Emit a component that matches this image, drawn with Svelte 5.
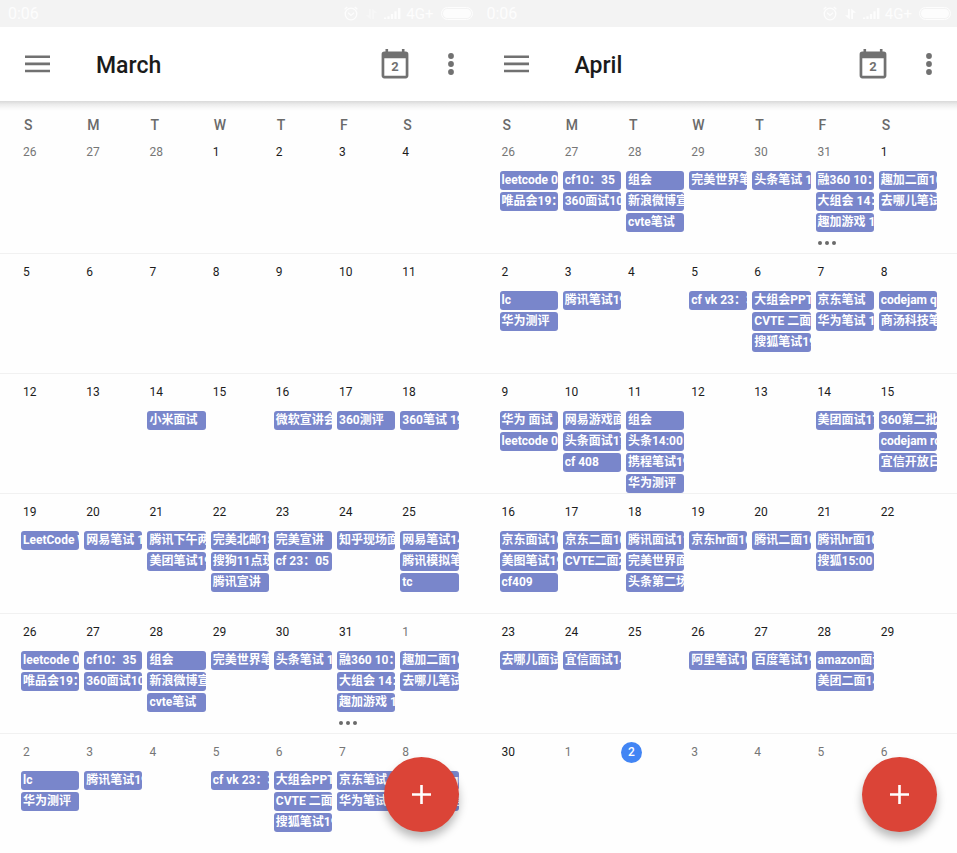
<script>
  const weekdays = [
    ['S', 'Sunday'], ['M', 'Monday'], ['T', 'Tuesday'], ['W', 'Wednesday'],
    ['T', 'Thursday'], ['F', 'Friday'], ['S', 'Saturday'],
  ];

  // The week that both months share.
  const turnOfMonth = [
    ['leetcode 09', '唯品会19：00'],
    ['cf10：35', '360面试10'],
    ['组会', '新浪微博宣讲', 'cvte笔试'],
    ['完美世界笔试'],
    ['头条笔试 19'],
    ['融360 10：00', '大组会 14：00', '趣加游戏 19'],
    ['趣加二面10', '去哪儿笔试'],
  ];
  const firstOfApril = [
    ['lc', '华为测评'],
    ['腾讯笔试19'],
    [],
    ['cf vk 23：35'],
    ['大组会PPT', 'CVTE 二面', '搜狐笔试19'],
    ['京东笔试', '华为笔试 19'],
    ['codejam qual', '商汤科技笔试'],
  ];

  // Builds one week; `outside` tells which days belong to another month.
  function week(dates, events = [], outside = () => false, more = -1, today = -1) {
    return dates.map((date, i) => ({
      date,
      events: events[i] ?? [],
      outside: outside(i),
      more: i === more,
      today: i === today,
    }));
  }

  const months = [
    {
      name: 'March',
      dataIdle: true,
      weeks: [
        week([26, 27, 28, 1, 2, 3, 4], [], (i) => i < 3),
        week([5, 6, 7, 8, 9, 10, 11]),
        week([12, 13, 14, 15, 16, 17, 18], [[], [], ['小米面试'], [], ['微软宣讲会'], ['360测评'], ['360笔试 19']]),
        week([19, 20, 21, 22, 23, 24, 25], [
          ['LeetCode Weekly'],
          ['网易笔试 15'],
          ['腾讯下午两点', '美团笔试19'],
          ['完美北邮18', '搜狗11点现场', '腾讯宣讲'],
          ['完美宣讲', 'cf 23：05'],
          ['知乎现场面试'],
          ['网易笔试14', '腾讯模拟笔试', 'tc'],
        ]),
        week([26, 27, 28, 29, 30, 31, 1], turnOfMonth, (i) => i > 5, 5),
        week([2, 3, 4, 5, 6, 7, 8], firstOfApril, () => true),
      ],
    },
    {
      name: 'April',
      dataIdle: false,
      weeks: [
        week([26, 27, 28, 29, 30, 31, 1], turnOfMonth, (i) => i < 6, 5),
        week([2, 3, 4, 5, 6, 7, 8], firstOfApril),
        week([9, 10, 11, 12, 13, 14, 15], [
          ['华为 面试', 'leetcode 09'],
          ['网易游戏面试', '头条面试17', 'cf 408'],
          ['组会', '头条14:00', '携程笔试19', '华为测评'],
          [],
          [],
          ['美团面试17'],
          ['360第二批笔试', 'codejam round', '宜信开放日'],
        ]),
        week([16, 17, 18, 19, 20, 21, 22], [
          ['京东面试10', '美图笔试19', 'cf409'],
          ['京东二面10', 'CVTE二面20'],
          ['腾讯面试11', '完美世界面试', '头条第二场'],
          ['京东hr面10'],
          ['腾讯二面10'],
          ['腾讯hr面10', '搜狐15:00'],
        ]),
        week([23, 24, 25, 26, 27, 28, 29], [
          ['去哪儿面试'],
          ['宜信面试14'],
          [],
          ['阿里笔试19'],
          ['百度笔试19'],
          ['amazon面试', '美团二面14'],
        ]),
        week([30, 1, 2, 3, 4, 5, 6], [], (i) => i > 0, -1, 2),
      ],
    },
  ];
</script>

<main>
  {#each months as month}
    <section class="phone" aria-label={month.name}>
      <div class="status">
        <span class="clock">0:06</span>
        <svg class="alarm" width="14" height="15" viewBox="0 0 14 15" fill="none" stroke="currentColor">
          <circle cx="7" cy="8" r="5.8" stroke-width="1.3" />
          <path d="M4.2 6.8 7 9.4l3-2.6" stroke-width="1.3" />
          <path d="M.6 3.2 3.3 1M13.4 3.2 10.7 1" stroke-width="1.2" />
        </svg>
        <svg class="arrows" class:idle={month.dataIdle} width="11" height="12" viewBox="0 0 11 12" fill="currentColor">
          <path d="M3 1h1.800v10.500L0 7.300h3zM6.200 11V.5L11 4.700H8V11z" />
        </svg>
        <svg class="signal" width="17" height="12" viewBox="0 0 17 12" fill="currentColor">
          <path d="M0 9.500h2.200V11H0zM3.400 8.200h2.200V11H3.400zM6.900 6h2.200v5H6.900zM10.400 3.200h2.200V11h-2.200zM14 0h2.400v11H14z" />
        </svg>
        <span class="network">4G+</span>
        <svg width="32" height="13" viewBox="0 0 32 13">
          <rect x=".5" y=".5" width="31" height="12" rx="6" fill="none" stroke="currentColor" />
          <rect x="2" y="2" width="28" height="9" rx="4.5" fill="currentColor" />
        </svg>
      </div>

      <header>
        <button type="button" aria-label="Open menu">
          <svg width="25" height="18" viewBox="0 0 25 18" fill="currentColor">
            <path d="M0 .5h25v2.600H0zM0 7.600h25v2.600H0zM0 14.700h25v2.600H0z" />
          </svg>
        </button>
        <h1>{month.name}</h1>
        <button type="button" aria-label="Go to today">
          <svg width="28" height="30" viewBox="0 0 28 30" fill="currentColor">
            <path fill-rule="evenodd" d="M4.500 0h2.600v2.600h13.800V0h2.600v2.600h1.100a2.800 2.800 0 0 1 2.800 2.800v21.200a2.800 2.800 0 0 1-2.800 2.800H3.400a2.800 2.800 0 0 1-2.800-2.800V5.400a2.800 2.800 0 0 1 2.800-2.800h1.100zM3.300 9.200v17.500h21.400V9.200z" />
            <text x="14" y="22" text-anchor="middle">2</text>
          </svg>
        </button>
        <button type="button" class="overflow" aria-label="More options">
          <svg width="6" height="22" viewBox="0 0 6 22" fill="currentColor">
            <circle cx="3" cy="3" r="2.9" /><circle cx="3" cy="11" r="2.9" /><circle cx="3" cy="19" r="2.9" />
          </svg>
        </button>
      </header>

      <table>
        <thead>
          <tr>
            {#each weekdays as [letter, name]}
              <th scope="col" abbr={name}>{letter}</th>
            {/each}
          </tr>
        </thead>
        <tbody>
          {#each month.weeks as days}
            <tr>
              {#each days as day}
                <td>
                  <span class="date" class:outside={day.outside} class:today={day.today}>{day.date}</span>
                  <div class="events">
                    {#each day.events as event}
                      <button type="button" class="chip">{event}</button>
                    {/each}
                    {#if day.more}
                      <button type="button" class="more" aria-label="More events"><i></i><i></i><i></i></button>
                    {/if}
                  </div>
                </td>
              {/each}
            </tr>
          {/each}
        </tbody>
      </table>

      <button type="button" class="fab" aria-label="Create event">
        <svg width="19" height="19" viewBox="0 0 19 19" fill="currentColor">
          <path d="M8.200 0h2.600v8.200H19v2.600h-8.200V19H8.200v-8.200H0V8.200h8.200z" />
        </svg>
      </button>
    </section>
  {/each}
</main>

<style>
  :global(body) {
    margin: 0;
    background: #fefefe;
  }

  main {
    display: grid;
    grid-template-columns: 1fr 1fr;
    min-height: 100vh;
    overflow: hidden;
    font-family: Roboto, "Noto Sans CJK SC", sans-serif;
  }

  button {
    margin: 0;
    padding: 0;
    border: 0;
    background: none;
    color: inherit;
    font: inherit;
    cursor: pointer;
  }

  svg {
    display: block;
  }

  .phone {
    position: relative;
    min-width: 0;
  }

  .status {
    display: flex;
    align-items: center;
    height: 27px;
    padding: 0 6px 0 8px;
    background: #f3f3f3;
    color: #fdfdfd;
    font-size: 16px;
  }

  .clock {
    flex: 1;
  }

  .arrows {
    margin-left: 8px;
  }

  .arrows.idle {
    color: #f7f7f7;
  }

  .signal {
    margin-left: 7px;
  }

  .network {
    margin: 0 7px 0 5px;
    font-size: 15px;
  }

  header {
    position: relative;
    display: flex;
    align-items: center;
    height: 74px;
    padding: 0 25px;
    background: #fff;
    color: #717171;
  }

  /* A strip of shadow under the bar that joins cleanly between months. */
  header::after {
    content: "";
    position: absolute;
    top: 100%;
    left: 0;
    right: 0;
    height: 10px;
    background: linear-gradient(#d9d9d9, #ececec 35%, #f8f8f8 70%, #fefefe);
  }

  h1 {
    flex: 1;
    margin: 4px 0 0 46px;
    color: #1a1a1a;
    font-size: 23px;
    font-weight: 500;
    line-height: 28px;
  }

  header text {
    font-size: 13px;
    font-weight: 700;
  }

  .overflow {
    margin-left: 39px;
  }

  table,
  thead,
  tbody {
    display: block;
  }

  tr {
    display: grid;
    grid-template-columns: repeat(7, minmax(0, 1fr));
    column-gap: 5px;
    padding: 0 20px 0 21px;
  }

  th {
    padding: 15px 0 0 3px;
    color: #6a6a6a;
    font-size: 14px;
    font-weight: 500;
    line-height: 18px;
    text-align: left;
  }

  tbody tr {
    box-sizing: border-box;
    height: 120px;
    border-bottom: 1px solid #f1f1f1;
  }

  tbody tr:last-child {
    border-bottom: 0;
  }

  td {
    padding: 8px 0 0;
  }

  .date {
    display: block;
    width: 21px;
    margin: 0 0 8px 2px;
    color: #1c1c1c;
    font-size: 12px;
    line-height: 21px;
  }

  .date.outside {
    color: #767676;
  }

  .date.today {
    margin-left: -5px;
    border-radius: 50%;
    background: #4285f4;
    color: #fff;
    font-weight: 500;
    text-align: center;
  }

  .events {
    display: flex;
    flex-direction: column;
    gap: 2px;
  }

  .chip {
    height: 19px;
    padding: 0 0 0 2px;
    overflow: hidden;
    border-radius: 3px;
    background: #7986cb;
    color: #fff;
    font-size: 12px;
    font-weight: 700;
    line-height: 19px;
    text-align: left;
    white-space: nowrap;
  }

  .more {
    display: flex;
    gap: 3px;
    padding: 7px 2px;
  }

  .more i {
    width: 4px;
    height: 4px;
    border-radius: 50%;
    background: #6a6a6a;
  }

  .fab {
    position: absolute;
    right: 20px;
    bottom: 22px;
    display: grid;
    place-items: center;
    width: 75px;
    height: 75px;
    border-radius: 50%;
    background: #db4437;
    color: #fff;
    box-shadow: 0 6px 10px rgba(0, 0, 0, 0.28);
  }
</style>
